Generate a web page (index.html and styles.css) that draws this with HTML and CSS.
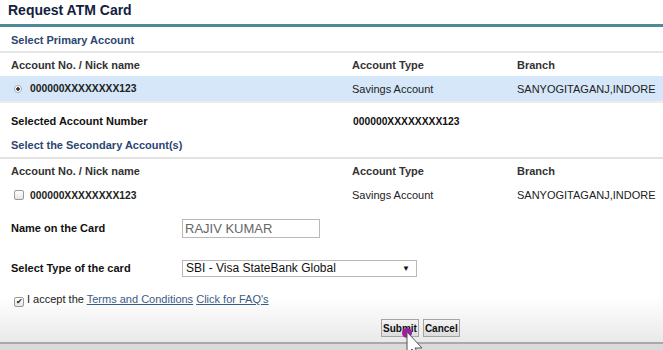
FILE: index.html
```html
<!DOCTYPE html>
<html lang="en">
<head>
  <meta charset="utf-8">
  <title>Request ATM Card</title>
  <link rel="stylesheet" href="styles.css">
</head>
<body>
  <div class="page">
    <h1 class="page-title">Request ATM Card</h1>

    <div class="section-label first">Select Primary Account</div>
    <div class="acct-table primary">
      <div class="acct-row head">
        <span>Account No. / Nick name</span>
        <span>Account Type</span>
        <span>Branch</span>
      </div>
      <div class="acct-row selected">
        <span class="acct-no"><span class="radio"></span>000000XXXXXXXX123</span>
        <span>Savings Account</span>
        <span>SANYOGITAGANJ,INDORE</span>
      </div>
    </div>

    <div class="selected-no">
      <span>Selected Account Number</span>
      <span class="value">000000XXXXXXXX123</span>
    </div>

    <div class="section-label second">Select the Secondary Account(s)</div>
    <div class="acct-table secondary">
      <div class="acct-row head">
        <span>Account No. / Nick name</span>
        <span>Account Type</span>
        <span>Branch</span>
      </div>
      <div class="acct-row">
        <span class="acct-no"><span class="check"></span>000000XXXXXXXX123</span>
        <span class="type">Savings Account</span>
        <span>SANYOGITAGANJ,INDORE</span>
      </div>
    </div>

    <div class="form-row name-row">
      <label>Name on the Card</label>
      <div class="text-input">RAJIV KUMAR</div>
    </div>

    <div class="form-row type-row">
      <label>Select Type of the card</label>
      <div class="select-box">
        <span>SBI - Visa StateBank Global</span>
        <span class="arrow">&#9660;</span>
      </div>
    </div>

    <div class="footer">
      <div class="accept">
        <span class="check checked">&#10004;</span>I accept the <a href="#">Terms and Conditions</a> <a href="#">Click for FAQ's</a>
      </div>
      <div class="buttons">
        <button class="btn">Submit</button>
        <button class="btn">Cancel</button>
        <svg class="cursor" width="26" height="30" viewBox="0 0 26 30">
          <circle cx="7" cy="6" r="5" fill="#9b1fa0"/>
          <path d="M7 5 L7 27 L12 22 L16 29 L19 27.5 L15 21 L22 21 Z" fill="#fff" stroke="#555" stroke-width="1"/>
        </svg>
      </div>
    </div>
    <div class="bottom-strip"></div>
  </div>
</body>
</html>
```

FILE: styles.css
```css
* {
  margin: 0;
  padding: 0;
  box-sizing: border-box;
}

body {
  width: 663px;
  height: 350px;
  overflow: hidden;
  background: #fff;
  font-family: Arial, "Liberation Sans", sans-serif;
  font-size: 11px;
  color: #222;
}

.page {
  height: 350px;
  display: flex;
  flex-direction: column;
}

.page-title {
  font-size: 14px;
  font-weight: bold;
  color: #12213d;
  height: 27px;
  padding: 2px 0 0 8px;
  border-bottom: 3px solid #4d8a99;
}

.section-label {
  font-weight: bold;
  color: #2c4670;
  padding-left: 11px;
  height: 23px;
  line-height: 20px;
}

.section-label.first {
  padding-top: 3px;
  height: 26px;
  border-bottom: 2px solid #e6e6e6;
}

.section-label.second {
  padding-top: 1px;
}

.acct-row {
  display: grid;
  grid-template-columns: 341px 165px 1fr;
  padding-left: 11px;
  height: 24px;
  align-items: center;
}

.acct-row.head {
  font-weight: bold;
  color: #333;
}

.primary .acct-row.head {
  height: 23px;
}

.acct-row.selected {
  background: #d5e7f8;
  border-bottom: 2px solid #ececec;
  height: 27px;
}

.acct-no {
  display: flex;
  align-items: center;
  padding-left: 3px;
}

.radio {
  width: 8px;
  height: 8px;
  border-radius: 50%;
  border: 1px solid #aaa;
  background: radial-gradient(circle, #333 0 1.5px, #fff 2px);
  margin-right: 8px;
}

.check {
  width: 10px;
  height: 10px;
  border: 1px solid #999;
  border-radius: 2px;
  background: linear-gradient(#fff, #e4e4e4);
  margin-right: 6px;
  display: inline-flex;
  align-items: center;
  justify-content: center;
  font-size: 8px;
  color: #222;
}

.acct-no,
.selected-no .value {
  font-weight: bold;
  font-size: 10.3px;
}

.selected-no {
  display: grid;
  grid-template-columns: 342px 1fr;
  padding: 0 0 7px 11px;
  height: 31px;
  align-items: end;
  font-weight: bold;
  color: #111;
}

.secondary {
  border-top: 2px solid #e2e2e2;
}

.form-row {
  display: grid;
  grid-template-columns: 171px 1fr;
  padding-left: 11px;
  height: 24px;
  align-items: center;
  font-weight: bold;
  color: #111;
}

.name-row {
  margin-top: 9px;
}

.text-input {
  width: 138px;
  height: 19px;
  border: 1px solid #b9b9b9;
  font-weight: normal;
  font-size: 13px;
  color: #666;
  padding-left: 2px;
  line-height: 17px;
}

.type-row {
  margin-top: 16px;
}

.select-box {
  width: 235px;
  height: 17px;
  border: 1px solid #b9b9b9;
  font-weight: normal;
  font-size: 12px;
  color: #111;
  display: flex;
  justify-content: space-between;
  align-items: center;
  padding: 0 6px 0 3px;
}

.select-box .arrow {
  font-size: 8px;
}

.footer {
  flex: 1;
  margin-top: 12px;
  background: linear-gradient(#fff 0, #fff 6px, #e9e9e9 50px);
  border-bottom: 2px solid #a9a9a9;
  position: relative;
}

.accept {
  padding-left: 14px;
  height: 14px;
  line-height: 14px;
}

.accept .check {
  margin-right: 3px;
  vertical-align: -1px;
}

.accept a {
  color: #3a5b88;
}

.buttons {
  display: flex;
  gap: 4px;
  padding-left: 381px;
  margin-top: 13px;
}

.btn {
  font-family: Arial, "Liberation Sans", sans-serif;
  font-size: 10px;
  font-weight: bold;
  height: 18px;
  padding: 0 1px;
  border: 1px solid #a5a5a5;
  background: linear-gradient(#f4f4f4, #dcdcdc);
  color: #111;
}

.cursor {
  position: absolute;
  left: 400px;
  top: 35px;
}

.bottom-strip {
  height: 6px;
  background: #dadada;
}
```
